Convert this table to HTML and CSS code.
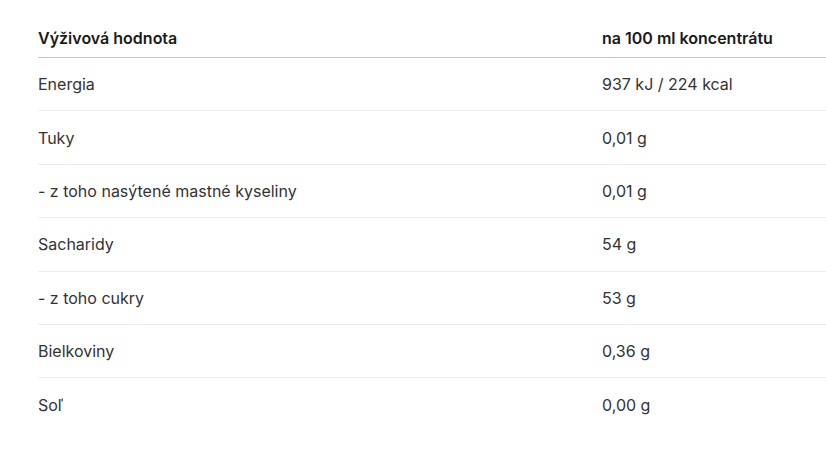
FILE: index.html
```html
<!DOCTYPE html>
<html lang="sk">
<head>
<meta charset="utf-8">
<title>Výživová hodnota</title>
<link rel="stylesheet" href="styles.css">
</head>
<body>
<div class="page">
  <table class="nutri">
    <thead>
      <tr><th>Výživová hodnota</th><th>na 100 ml koncentrátu</th></tr>
    </thead>
    <tbody>
      <tr><td>Energia</td><td>937 kJ / 224 kcal</td></tr>
      <tr><td>Tuky</td><td>0,01 g</td></tr>
      <tr><td>- z toho nasýtené mastné kyseliny</td><td>0,01 g</td></tr>
      <tr><td>Sacharidy</td><td>54 g</td></tr>
      <tr><td>- z toho cukry</td><td>53 g</td></tr>
      <tr><td>Bielkoviny</td><td>0,36 g</td></tr>
      <tr><td>Soľ</td><td>0,00 g</td></tr>
    </tbody>
  </table>
</div>
</body>
</html>
```
FILE: styles.css
```css
html, body {
  margin: 0;
  padding: 0;
  background: #fff;
}
body {
  font-family: Inter, "Noto Sans", sans-serif;
  color: #333;
  font-size: 16px;
}
.page {
  padding: 0 0 0 38px;
}
.nutri {
  width: 100%;
  border-collapse: collapse;
}
.nutri th {
  text-align: left;
  font-weight: 600;
  color: #1a1a1a;
  font-size: 16px;
  line-height: 20px;
  padding: 28px 0 9px 0;
  border-bottom: 1px solid #c6c6c6;
}
.nutri th:first-child,
.nutri td:first-child {
  width: 564px;
}
.nutri td {
  height: 53.4px;
  box-sizing: border-box;
  padding: 0 0 0 0;
  line-height: 20px;
  vertical-align: middle;
  border-bottom: 1px solid #ededed;
}
.nutri tbody tr:last-child td {
  border-bottom: none;
}
```
